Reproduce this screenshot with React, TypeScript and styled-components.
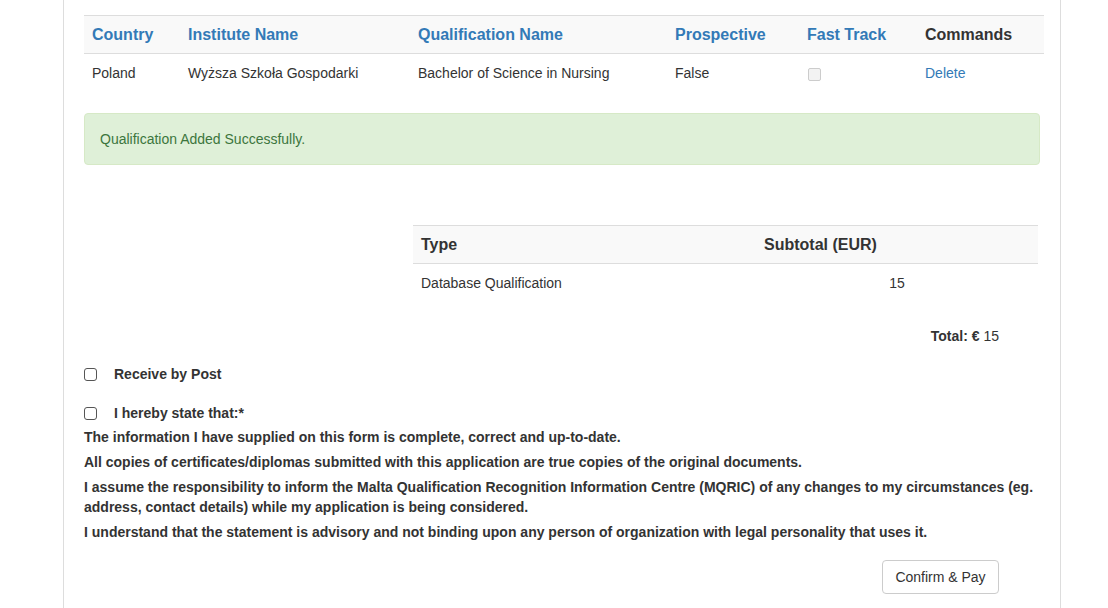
import React from "react";
import styled, { createGlobalStyle } from "styled-components";

const G = createGlobalStyle`
  html,body{margin:0;padding:0;background:#fff;font-family:"Liberation Sans",Arial,sans-serif;font-size:14px;color:#333;}
`;
const Page = styled.div`
  margin-left:63px;width:998px;height:608px;overflow:hidden;
  border-left:1px solid #ddd;border-right:1px solid #ddd;
  padding:15px 20px 0 20px;box-sizing:border-box;
`;
const Table = styled.table<{ w?: number; ml?: number }>`
  border-collapse:collapse;width:${p => p.w ?? 960}px;margin-left:${p => p.ml ?? 0}px;table-layout:fixed;
`;
const Th = styled.th<{ blue?: boolean; w?: number }>`
  text-align:left;font-size:16px;font-weight:bold;color:${p => (p.blue ? "#337ab7" : "#333")};
  background:#f9f9f9;border-top:1px solid #ddd;border-bottom:1px solid #ddd;
  height:38px;padding:0 8px;${p => (p.w ? `width:${p.w}px;` : "")}box-sizing:border-box;
`;
const Td = styled.td<{ center?: boolean }>`
  padding:0 8px;height:38px;font-size:14px;text-align:${p => (p.center ? "center" : "left")};
`;
const Link = styled.span`color:#337ab7;`;
const SmallBox = styled.span`
  display:inline-block;width:11px;height:11px;border:1px solid #ccc;border-radius:2px;background:#f3f3f3;vertical-align:middle;margin-left:1px;
`;
const Alert = styled.div`
  margin-top:21px;height:52px;box-sizing:border-box;background:#dff0d8;border:1px solid #d6e9c6;border-radius:4px;
  color:#3c763d;padding:0 15px;display:flex;align-items:center;
`;
const Total = styled.div`
  margin-top:26px;width:915px;text-align:right;font-size:14px;
  b{font-weight:bold;}
`;
const CheckRow = styled.label<{ mt: number }>`
  display:flex;align-items:center;margin-top:${p => p.mt}px;font-weight:bold;
`;
const Box = styled.span`
  width:11px;height:11px;border:1px solid #555;border-radius:3px;margin-right:17px;
`;
const P = styled.p`
  margin:5px 0 0;font-weight:bold;line-height:20px;
`;
const BtnRow = styled.div`display:flex;justify-content:flex-end;width:915px;margin-top:18px;`;
const Btn = styled.button`
  font-family:inherit;font-size:14px;color:#333;background:#fff;border:1px solid #ccc;border-radius:4px;
  width:117px;height:34px;
`;

export default function App() {
  return (
    <>
      <G />
      <Page>
        <Table>
          <thead><tr>
            <Th blue w={96}>Country</Th><Th blue w={230}>Institute Name</Th><Th blue w={257}>Qualification Name</Th>
            <Th blue w={132}>Prospective</Th><Th blue w={118}>Fast Track</Th><Th>Commands</Th>
          </tr></thead>
          <tbody><tr>
            <Td>Poland</Td><Td>Wyższa Szkoła Gospodarki</Td><Td>Bachelor of Science in Nursing</Td>
            <Td>False</Td><Td><SmallBox /></Td><Td><Link>Delete</Link></Td>
          </tr></tbody>
        </Table>
        <Alert>Qualification Added Successfully.</Alert>
        <div style={{ height: 60 }} />
        <Table w={625} ml={329}>
          <thead><tr><Th w={343}>Type</Th><Th>Subtotal (EUR)</Th></tr></thead>
          <tbody><tr><Td>Database Qualification</Td><Td center>15</Td></tr></tbody>
        </Table>
        <Total><b>Total: €</b> 15</Total>
        <CheckRow mt={22}><Box />Receive by Post</CheckRow>
        <CheckRow mt={23}><Box />I hereby state that:*</CheckRow>
        <P style={{ marginTop: 6 }}>The information I have supplied on this form is complete, correct and up-to-date.</P>
        <P>All copies of certificates/diplomas submitted with this application are true copies of the original documents.</P>
        <P>I assume the responsibility to inform the Malta Qualification Recognition Information Centre (MQRIC) of any changes to my circumstances (eg. address, contact details) while my application is being considered.</P>
        <P>I understand that the statement is advisory and not binding upon any person of organization with legal personality that uses it.</P>
        <BtnRow><Btn>Confirm &amp; Pay</Btn></BtnRow>
      </Page>
    </>
  );
}
